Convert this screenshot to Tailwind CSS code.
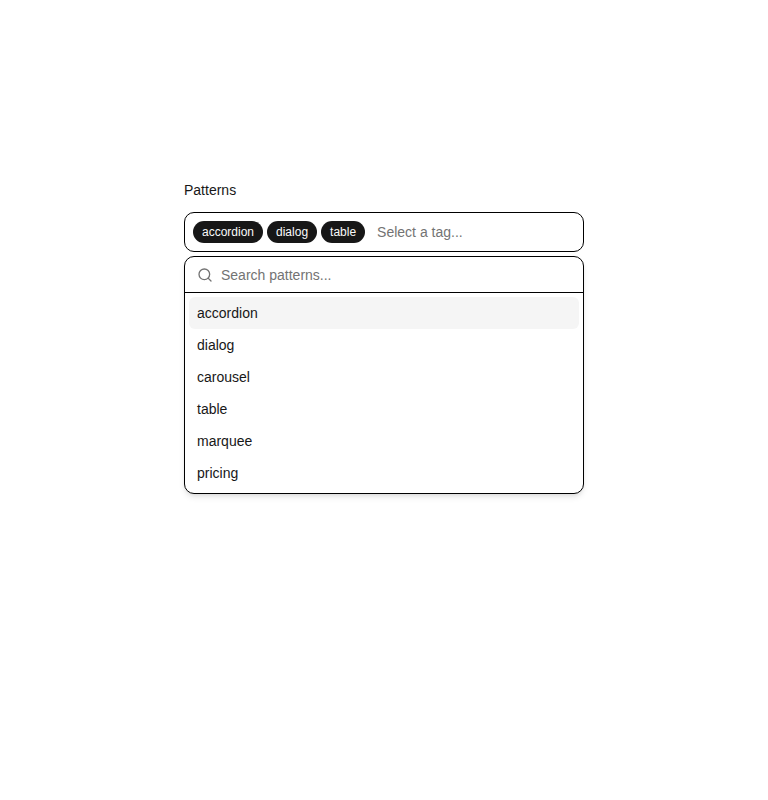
<!DOCTYPE html>
<html><head><meta charset="utf-8"><script src="https://cdn.jsdelivr.net/npm/@tailwindcss/browser@4"></script></head>
<body class="bg-white font-['Liberation_Sans',Arial,sans-serif]">
<div class="flex h-[800px] w-full flex-col items-center pt-[180px]">
<div class="flex w-[400px] flex-col">
<label class="mb-3 text-sm leading-5 text-[#171717]">Patterns</label>
<div class="flex h-10 items-center gap-1 rounded-[10px] border border-black bg-white px-2">
<span class="flex h-[22px] items-center rounded-full bg-[#171717] px-[9px] text-xs text-[#fafafa]">accordion</span>
<span class="flex h-[22px] items-center rounded-full bg-[#171717] px-[9px] text-xs text-[#fafafa]">dialog</span>
<span class="flex h-[22px] items-center rounded-full bg-[#171717] px-[9px] text-xs text-[#fafafa]">table</span>
<span class="ml-2 text-sm text-[#737373]">Select a tag...</span>
</div>
<div class="mt-1 overflow-hidden rounded-[10px] border border-black bg-white shadow-md">
<div class="flex h-9 items-center gap-2 border-b border-black px-3">
<svg class="size-4 text-[#737373]" viewBox="0 0 24 24" fill="none" stroke="currentColor" stroke-width="2" stroke-linecap="round" stroke-linejoin="round"><path d="m21 21-4.34-4.34"/><circle cx="11" cy="11" r="8"/></svg>
<span class="text-sm text-[#737373]">Search patterns...</span>
</div>
<div class="flex flex-col p-1 text-sm text-[#171717]">
<div class="flex h-8 items-center rounded-md bg-[#f5f5f5] px-2">accordion</div>
<div class="flex h-8 items-center px-2">dialog</div>
<div class="flex h-8 items-center px-2">carousel</div>
<div class="flex h-8 items-center px-2">table</div>
<div class="flex h-8 items-center px-2">marquee</div>
<div class="flex h-8 items-center px-2">pricing</div>
</div>
</div>
</div>
</div>
</body></html>
